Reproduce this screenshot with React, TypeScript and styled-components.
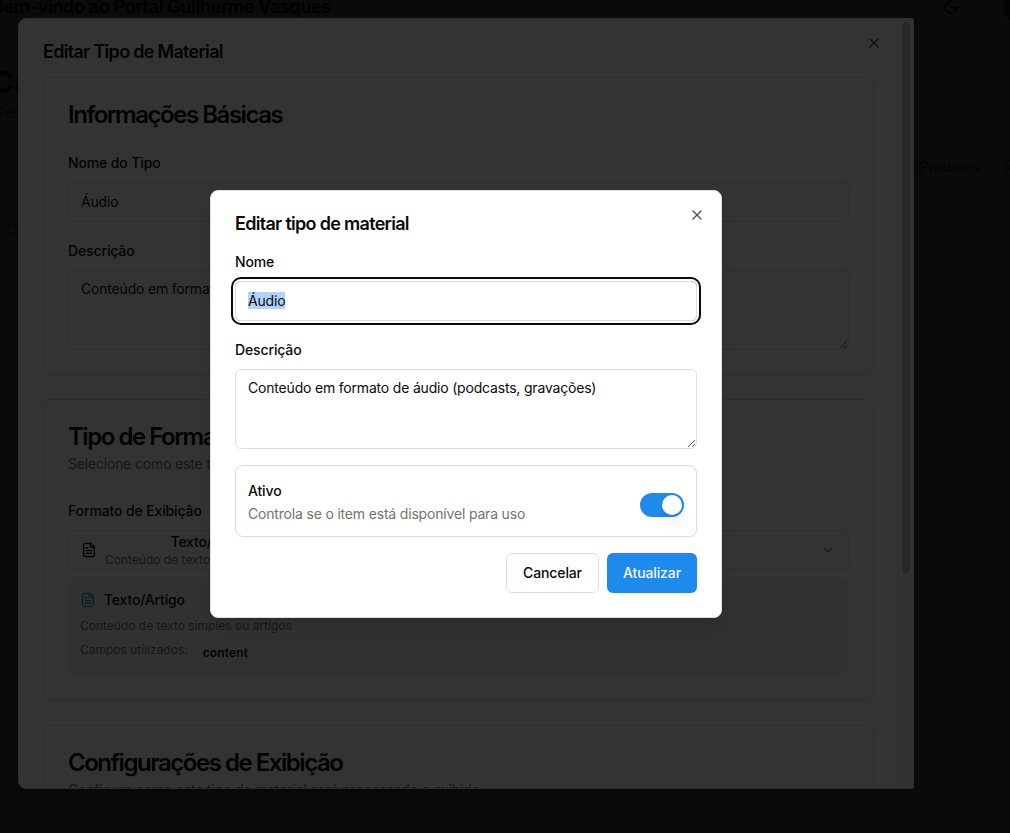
import React from "react";
import styled, { createGlobalStyle, css } from "styled-components";

const GlobalStyle = createGlobalStyle`
  *, *::before, *::after { box-sizing: border-box; }
  html, body { margin: 0; padding: 0; height: 100%; overflow: hidden; }
  body {
    font-family: Inter, "Liberation Sans", sans-serif;
    font-size: 16px;
    line-height: 24px;
    color: #0c0a09;
    background: #fff;
    -webkit-font-smoothing: antialiased;
  }
  h1, h2, h3, p { margin: 0; }
  button, input, textarea { font: inherit; color: inherit; }
`;

const line = "#dddedf";

const Screen = styled.div`
  position: relative;
  width: 1010px;
  height: 833px;
  overflow: hidden;
`;

/* Page behind the dialogs */
const Page = styled.div`
  width: 1026px;
  height: 833px;
  margin-left: -8px;
  display: flex;
  flex-direction: column;
  background: #fcfcfc;
`;
const TopBar = styled.header`
  display: flex;
  align-items: center;
  justify-content: space-between;
  height: 48px;
  margin-top: -17px;
`;
const Welcome = styled.h2`
  font-size: 18px;
  font-weight: 600;
  line-height: 28px;
  letter-spacing: -0.33px;
`;
const TopActions = styled.div`
  display: flex;
  align-items: center;
  gap: 44px;
  margin-right: -17px;
`;
const Avatar = styled.span`
  width: 32px;
  height: 32px;
  border-radius: 50%;
  background: #1f8aed;
`;
const PageTitle = styled.h1`
  margin-top: 33px;
  font-size: 30px;
  line-height: 36px;
  font-weight: 700;
`;
const PageText = styled.p`
  margin-top: 0;
  color: #78716c;
  font-size: 16px;
`;
const TabRow = styled.nav`
  display: flex;
  justify-content: flex-end;
  align-items: center;
  gap: 24px;
  margin: 31px -2px 0 0;
  color: #78716c;
  font-size: 14px;
  font-weight: 500;
`;
const SearchRow = styled.div`
  display: flex;
  margin: 43px 0 0 14px;
  color: #78716c;
`;

const Overlay = styled.div`
  position: absolute;
  inset: 0;
  background: rgba(0, 0, 0, 0.8);
`;

const dialogBase = css`
  position: absolute;
  background: #fff;
  border: 1px solid ${line};
  box-shadow: 0 10px 15px -3px rgba(0, 0, 0, 0.1), 0 4px 6px -4px rgba(0, 0, 0, 0.1);
`;
const LargeDialog = styled.section`
  ${dialogBase}
  left: 18px;
  top: 18px;
  width: 896px;
  height: 771px;
  border-radius: 8px 2px 2px 8px;
  display: flex;
  overflow: hidden;
`;
const LargeBody = styled.div`
  position: relative;
  flex: 1;
  height: 769px;
  padding: 24px;
  overflow: hidden;
`;
const ScrollTrack = styled.div`
  width: 15px;
  padding: 3px 3px 0 3px;
  border-left: 1px solid #ededed;
  background: #fafafa;
`;
const ScrollThumb = styled.div`
  width: 8px;
  height: 551px;
  border-radius: 4px;
  background: #c1c1c1;
`;
const SmallDialog = styled.section`
  ${dialogBase}
  left: 210px;
  top: 190px;
  width: 512px;
  height: 428px;
  padding: 24px;
  border-radius: 8px;
`;
const DialogTitle = styled.h2`
  font-size: 18px;
  line-height: 18px;
  font-weight: 600;
  letter-spacing: -0.7px;
`;
const CloseButton = styled.button`
  position: absolute;
  top: 16px;
  right: 16px;
  display: flex;
  width: 16px;
  height: 16px;
  padding: 0;
  border: 0;
  background: none;
  opacity: 0.7;
`;
const Card = styled.div<{ $first?: boolean }>`
  margin-top: ${(p) => (p.$first ? 16 : 24)}px;
  padding: 24px;
  border: 1px solid ${line};
  border-radius: 8px;
  box-shadow: 0 1px 2px rgba(0, 0, 0, 0.05);
`;
const CardTitle = styled.h3`
  height: 24px;
  font-size: 24px;
  line-height: 26px;
  font-weight: 600;
  letter-spacing: -1.47px;
`;
const CardText = styled.p`
  margin-top: 6px;
  font-size: 14px;
  line-height: 20px;
  letter-spacing: -0.18px;
  color: #78716c;
`;
const Fields = styled.div<{ $top: number }>`
  display: flex;
  flex-direction: column;
  gap: 16px;
  margin-top: ${(p) => p.$top}px;
`;
const Field = styled.div`
  display: flex;
  flex-direction: column;
  gap: 8px;
`;
const LabelLine = styled.div`
  height: 24px;
`;
const Label = styled.label`
  font-size: 14px;
  line-height: 14px;
  font-weight: 500;
  letter-spacing: -0.13px;
`;
const TextBox = styled.div<{ $focused?: boolean }>`
  height: 40px;
  padding: 9px 12px;
  border: 1px solid ${line};
  border-radius: 6px;
  font-size: 14px;
  line-height: 20px;
  letter-spacing: -0.19px;
  ${(p) => p.$focused && "box-shadow: 0 0 0 2px #fff, 0 0 0 4px #0c0a09;"}
`;
const Selected = styled.span`
  background: #b0d3fb;
`;
const TextArea = styled.textarea`
  display: block;
  width: 100%;
  height: 80px;
  padding: 8px 12px;
  border: 1px solid ${line};
  border-radius: 6px;
  background: transparent;
  font-size: 14px;
  line-height: 20px;
  letter-spacing: -0.19px;
  resize: vertical;
  outline: none;
`;
const Select = styled.button`
  display: flex;
  align-items: center;
  justify-content: space-between;
  width: 100%;
  height: 40px;
  padding: 0 12px;
  border: 1px solid ${line};
  border-radius: 6px;
  background: transparent;
`;
const SelectValue = styled.span`
  display: flex;
  align-items: center;
  gap: 8px;
`;
const OptionText = styled.span`
  display: flex;
  flex-direction: column;
  align-items: center;
`;
const Name = styled.span`
  font-size: 14px;
  line-height: 20px;
  font-weight: 500;
  letter-spacing: -0.18px;
`;
const Small = styled.span`
  font-size: 12px;
  line-height: 16px;
  color: #78716c;
`;
const Faded = styled.span`
  display: flex;
  opacity: 0.5;
`;
const Preview = styled.div`
  display: flex;
  flex-direction: column;
  gap: 8px;
  height: 98px;
  padding: 12px;
  border-radius: 8px;
  background: #f5f5f0;
`;
const PreviewHead = styled.div`
  display: flex;
  align-items: center;
  gap: 8px;
`;
const UsedFields = styled.div`
  display: flex;
  align-items: flex-start;
  gap: 4px;
`;
const Badge = styled.span`
  height: 22px;
  padding: 2px 10px;
  border: 1px solid ${line};
  border-radius: 11px;
  font-size: 12px;
  line-height: 16px;
  font-weight: 600;
  letter-spacing: 0.12px;
`;
const ToggleRow = styled.div`
  display: flex;
  justify-content: space-between;
  height: 72px;
  padding: 12px;
  border: 1px solid ${line};
  border-radius: 8px;
  box-shadow: 0 1px 2px rgba(0, 0, 0, 0.05);
`;
const ToggleText = styled.div`
  display: flex;
  flex-direction: column;
  gap: 2px;
`;
const Hint = styled.p`
  font-size: 14px;
  line-height: 20px;
  letter-spacing: -0.18px;
  color: #78716c;
`;
const Switch = styled.button`
  display: flex;
  justify-content: flex-end;
  width: 44px;
  height: 24px;
  margin-top: 15px;
  padding: 2px;
  border: 0;
  border-radius: 12px;
  background: #1f8aed;
`;
const Knob = styled.span`
  width: 20px;
  height: 20px;
  border-radius: 50%;
  background: #fff;
  box-shadow: 0 10px 15px -3px rgba(0, 0, 0, 0.1), 0 4px 6px -4px rgba(0, 0, 0, 0.1);
`;
const Footer = styled.div`
  display: flex;
  justify-content: flex-end;
  gap: 8px;
`;
const Button = styled.button<{ $primary?: boolean }>`
  width: ${(p) => (p.$primary ? 90 : 93)}px;
  height: 40px;
  padding: 0;
  border: ${(p) => (p.$primary ? "0" : `1px solid ${line}`)};
  border-radius: 6px;
  background: ${(p) => (p.$primary ? "#1f8aed" : "#fff")};
  color: ${(p) => (p.$primary ? "#f5f9ff" : "#0c0a09")};
  font-size: 14px;
  line-height: 20px;
  font-weight: 500;
  letter-spacing: -0.13px;
`;

const Icon = ({ children, size = 16, color = "currentColor" }: { children: React.ReactNode; size?: number; color?: string }) => (
  <svg width={size} height={size} viewBox="0 0 24 24" fill="none" stroke={color} strokeWidth={2} strokeLinecap="round" strokeLinejoin="round">
    {children}
  </svg>
);
const CloseIcon = () => (
  <Icon>
    <path d="M18 6 6 18" />
    <path d="m6 6 12 12" />
  </Icon>
);
const FileIcon = ({ color }: { color?: string }) => (
  <Icon color={color}>
    <path d="M15 2H6a2 2 0 0 0-2 2v16a2 2 0 0 0 2 2h12a2 2 0 0 0 2-2V7Z" />
    <path d="M14 2v4a2 2 0 0 0 2 2h4" />
    <path d="M10 9H8" />
    <path d="M16 13H8" />
    <path d="M16 17H8" />
  </Icon>
);

const FieldLabel = ({ children }: { children: React.ReactNode }) => (
  <LabelLine>
    <Label>{children}</Label>
  </LabelLine>
);

const description = "Conteúdo em formato de áudio (podcasts, gravações)";

function BackgroundPage() {
  return (
    <Page>
      <TopBar>
        <Welcome>Bem-vindo ao Portal Guilherme Vasques</Welcome>
        <TopActions>
          <Icon>
            <path d="M12 3a6 6 0 0 0 9 9 9 9 0 1 1-9-9Z" />
          </Icon>
          <Avatar />
        </TopActions>
      </TopBar>
      <PageTitle>Ca</PageTitle>
      <PageText>Ger</PageText>
      <TabRow>
        <span>de Produtos</span>
        <Icon>
          <path d="M16 21v-2a4 4 0 0 0-4-4H6a4 4 0 0 0-4 4v2" />
          <circle cx="9" cy="7" r="4" />
          <path d="M22 21v-2a4 4 0 0 0-3-3.87" />
        </Icon>
      </TabRow>
      <SearchRow>
        <Icon>
          <circle cx="11" cy="11" r="8" />
          <path d="m21 21-4.3-4.3" />
        </Icon>
      </SearchRow>
    </Page>
  );
}

function MaterialTypeDialog() {
  return (
    <LargeDialog>
      <LargeBody>
        <DialogTitle>Editar Tipo de Material</DialogTitle>
        <Card $first>
          <CardTitle>Informações Básicas</CardTitle>
          <Fields $top={24}>
            <Field>
              <FieldLabel>Nome do Tipo</FieldLabel>
              <TextBox>Áudio</TextBox>
            </Field>
            <Field>
              <FieldLabel>Descrição</FieldLabel>
              <TextArea readOnly value={description} />
            </Field>
          </Fields>
        </Card>
        <Card>
          <CardTitle>Tipo de Formato</CardTitle>
          <CardText>Selecione como este tipo</CardText>
          <Fields $top={24}>
            <Field>
              <FieldLabel>Formato de Exibição</FieldLabel>
              <Select>
                <SelectValue>
                  <FileIcon />
                  <OptionText>
                    <Name>Texto/Artigo</Name>
                    <Small>Conteúdo de texto simples ou artigos</Small>
                  </OptionText>
                </SelectValue>
                <Faded>
                  <Icon>
                    <path d="m6 9 6 6 6-6" />
                  </Icon>
                </Faded>
              </Select>
              <Preview>
                <PreviewHead>
                  <FileIcon color="#1f8aed" />
                  <Name>Texto/Artigo</Name>
                </PreviewHead>
                <Small>Conteúdo de texto simples ou artigos</Small>
                <UsedFields>
                  <Small>Campos utilizados:</Small>
                  <Badge>content</Badge>
                </UsedFields>
              </Preview>
            </Field>
          </Fields>
        </Card>
        <Card>
          <CardTitle>Configurações de Exibição</CardTitle>
          <CardText>Configure como este tipo de material será processado e exibido</CardText>
        </Card>
        <CloseButton aria-label="Fechar">
          <CloseIcon />
        </CloseButton>
      </LargeBody>
      <ScrollTrack>
        <ScrollThumb />
      </ScrollTrack>
    </LargeDialog>
  );
}

function EditDialog() {
  return (
    <SmallDialog>
      <DialogTitle>Editar tipo de material</DialogTitle>
      <Fields $top={16}>
        <Field>
          <FieldLabel>Nome</FieldLabel>
          <TextBox $focused>
            <Selected>Áudio</Selected>
          </TextBox>
        </Field>
        <Field>
          <FieldLabel>Descrição</FieldLabel>
          <TextArea readOnly value={description} />
        </Field>
        <ToggleRow>
          <ToggleText>
            <FieldLabel>Ativo</FieldLabel>
            <Hint>Controla se o item está disponível para uso</Hint>
          </ToggleText>
          <Switch role="switch" aria-checked="true" aria-label="Ativo">
            <Knob />
          </Switch>
        </ToggleRow>
        <Footer>
          <Button>Cancelar</Button>
          <Button $primary>Atualizar</Button>
        </Footer>
      </Fields>
      <CloseButton aria-label="Fechar">
        <CloseIcon />
      </CloseButton>
    </SmallDialog>
  );
}

export default function App() {
  return (
    <Screen>
      <GlobalStyle />
      <BackgroundPage />
      <Overlay />
      <MaterialTypeDialog />
      <Overlay />
      <EditDialog />
    </Screen>
  );
}
